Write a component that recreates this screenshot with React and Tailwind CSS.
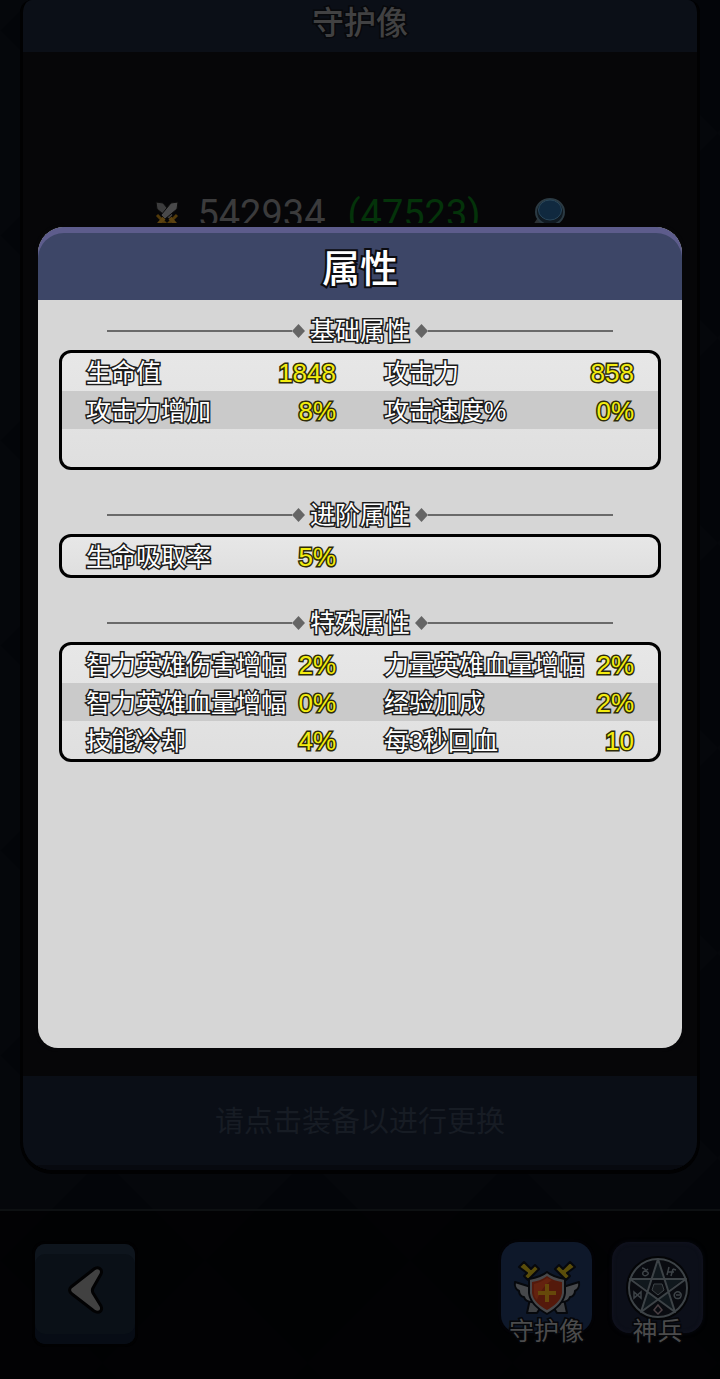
import React from "react";

const FONT = "font-['Liberation_Sans','Noto_Sans_CJK_SC',sans-serif]";
const OUTLINE = "[-webkit-text-stroke:3px_#1c1c1c] [paint-order:stroke_fill]";
const VALUE_OUTLINE = "[-webkit-text-stroke:3px_#2e2c08] [paint-order:stroke_fill]";

const SECTIONS = [
  {
    title: "基础属性",
    rows: [
      [["生命值", "1848"], ["攻击力", "858"]],
      [["攻击力增加", "8%"], ["攻击速度%", "0%"]],
      [],
    ],
  },
  { title: "进阶属性", rows: [[["生命吸取率", "5%"]]] },
  {
    title: "特殊属性",
    rows: [
      [["智力英雄伤害增幅", "2%"], ["力量英雄血量增幅", "2%"]],
      [["智力英雄血量增幅", "0%"], ["经验加成", "2%"]],
      [["技能冷却", "4%"], ["每3秒回血", "10"]],
    ],
  },
];

function Backdrop() {
  return (
    <svg className="absolute inset-0 h-full w-full" aria-hidden="true">
      <defs>
        <pattern id="rhombs" width="205" height="205" y="133" patternUnits="userSpaceOnUse">
          <rect width="205" height="205" fill="#05070b" />
          <path d="M102.5 0L205 102.5L102.5 205L0 102.5Z" fill="#030509" />
        </pattern>
      </defs>
      <rect width="100%" height="100%" fill="url(#rhombs)" />
    </svg>
  );
}

function Swords() {
  return (
    <svg viewBox="0 0 24 26" className="h-[26px] w-6" aria-hidden="true">
      <path d="M1 1L8 2L18 14L14 18L2 8Z" fill="#3c3c3d" stroke="#0b0b0b" />
      <path d="M23 1L16 2L6 14L10 18L22 8Z" fill="#49494a" stroke="#0b0b0b" />
      <path d="M2 14L11 23M22 14L13 23" stroke="#523a0a" strokeWidth="3" />
      <path d="M9 17L2 25M15 17L22 25" stroke="#5c4210" strokeWidth="4" />
    </svg>
  );
}

function Magnifier() {
  return (
    <svg viewBox="0 0 32 36" className="h-9 w-8" aria-hidden="true">
      <path d="M7 23L1 32" stroke="#2b3033" strokeWidth="5" strokeLinecap="round" />
      <ellipse cx="17" cy="16" rx="14" ry="13" fill="#101a22" stroke="#2b3a43" strokeWidth="2" />
      <ellipse cx="17" cy="14" rx="11.500" ry="10" fill="#10293f" stroke="#29465a" strokeWidth="1" />
    </svg>
  );
}

function ShieldIcon() {
  return (
    <svg viewBox="0 0 68 56" className="h-14 w-[68px]" aria-hidden="true">
      <g stroke="#06080c" strokeWidth="2" strokeLinejoin="round">
        <path d="M17 39L14 53H24L29 45Z" fill="#3f4144" />
        <path d="M51 39L54 53H44L39 45Z" fill="#3f4144" />
        <path d="M18 27L2 22C1 27 4 30 6 31C6 35 9 37 11 37C12 40 15 42 19 42Z" fill="#46484b" />
        <path d="M50 27L66 22C67 27 64 30 62 31C62 35 59 37 57 37C56 40 53 42 49 42Z" fill="#46484b" />
        <path d="M6 7L11 2L18 9L22 5L26 9L15 20L11 16L14 13Z" fill="#5a4d0a" />
        <path d="M62 7L57 2L50 9L46 5L42 9L53 20L57 16L54 13Z" fill="#5a4d0a" />
        <path d="M34 12C40 17 46 18 52 19V33C51 43 43 49 34 54C25 49 17 43 16 33V19C22 18 28 17 34 12Z" fill="#48484a" />
      </g>
      <path d="M34 16C39 20 44 21 49 22V33C48 41 41 46 34 50C27 46 20 41 19 33V22C24 21 29 20 34 16Z" fill="#54190b" />
      <path d="M34 18C30 21 25 23 21 24V33C21 36 22 38 24 40C27 32 31 25 39 20Z" fill="#64220f" />
      <path d="M34 24V42M25 33H43" stroke="#66480a" strokeWidth="4" />
    </svg>
  );
}

function PentagramIcon() {
  return (
    <svg viewBox="0 0 64 64" className="h-16 w-16" fill="none" stroke="#3d4347" aria-hidden="true">
      <circle cx="32" cy="32" r="30" fill="#090b10" stroke="#040507" strokeWidth="4" />
      <path d="M32 3L38 22H26ZM59 22L43 34L38 22ZM5 22L21 34L26 22ZM49 57L43 36L32 43ZM15 57L21 36L32 43Z" fill="#10181d" stroke="none" />
      <circle cx="32" cy="32" r="29" strokeWidth="2" />
      <path d="M32 3L49 56L4 23H60L15 56Z" strokeWidth="2" strokeLinejoin="round" />
      <path d="M28 28H36L38 34L32 39L26 34Z" fill="#15191d" strokeWidth="1" />
      <g strokeWidth="1.500">
        <path d="M16 12C20 12 19 16 22 13M18 15C15 18 18 21 21 19C24 17 21 15 18 15" />
        <path d="M43 11L41 19M47 13L45 20M41 16L48 16M47 13L50 14" />
        <path d="M8 36L15 42V36L8 42Z" />
        <path d="M49 37C53 34 57 38 54 42C49 44 47 40 49 37M50 39H54" />
        <path d="M32 49L36 54L32 58L28 54Z" stroke="#4a3f43" />
      </g>
    </svg>
  );
}

function TabButton({ label, className, children }) {
  return (
    <button type="button" className="flex w-[91px] flex-col items-center">
      <span className={`flex h-[91px] w-full items-center justify-center rounded-[18px] ${className}`}>
        {children}
      </span>
      <span className="-mt-[18px] text-[25px] leading-8 text-[#4b4b4c] [-webkit-text-stroke:3px_#050609] [paint-order:stroke_fill]">
        {label}
      </span>
    </button>
  );
}

function Divider({ flip }) {
  return (
    <span className={`flex flex-1 items-center ${flip ? "flex-row-reverse" : ""}`}>
      <span className="h-0.5 flex-1 bg-[#6a6a6a]" />
      <svg viewBox="0 0 13 14" className="h-3.5 w-[13px]" aria-hidden="true">
        <path d="M6.500 0L13 7L6.500 14L0 7Z" fill="#656565" />
      </svg>
    </span>
  );
}

function Section({ title, rows }) {
  return (
    <section>
      <h3 className="flex h-[38px] items-center gap-[5px] px-12 text-[25px] leading-[38px] text-white">
        <Divider />
        <span className={OUTLINE}>{title}</span>
        <Divider flip />
      </h3>
      <dl className="overflow-hidden rounded-xl border-3 border-black bg-linear-to-b from-[#e7e7e7] to-[#dfdfdf]">
        {rows.map((row, i) => (
          <div key={i} className={`grid h-[38px] grid-cols-2 ${i % 2 ? "bg-[#cacaca]" : ""}`}>
            {row.map(([name, value]) => (
              <div key={name} className="flex items-center justify-between px-6 leading-[40px] whitespace-nowrap">
                <dt className={`text-[25px] text-white ${OUTLINE}`}>{name}</dt>
                <dd className={`text-[26px] text-[#f3ec10] ${VALUE_OUTLINE}`}>{value}</dd>
              </div>
            ))}
          </div>
        ))}
      </dl>
    </section>
  );
}

export default function App() {
  return (
    <div className={`relative flex min-h-screen flex-col bg-[#040508] ${FONT}`}>
      <Backdrop />

      <main className="relative mb-[35px] flex flex-1 flex-col px-5">
        <div className="flex flex-1 flex-col overflow-hidden rounded-t-xl rounded-b-[32px] border-x-3 border-b-4 border-[#010102] bg-[#060608]">
          <h1 className="h-[52px] bg-[#0b0f17] text-center text-[32px] leading-[46px] font-medium text-[#414142] [-webkit-text-stroke:3px_#07080b] [paint-order:stroke_fill]">
            守护像
          </h1>
          <div className="flex flex-1 items-start justify-center pt-[140px] font-['Roboto','Noto_Sans_CJK_SC',sans-serif] text-[38px] leading-[44px]">
            <span className="mr-[18px] pt-[9px]"><Swords /></span>
            <span className="mr-[22px] text-[#3b3b3c]">542934</span>
            <span className="mr-[52px] text-[#04330a]">(47523)</span>
            <button type="button" aria-label="查看属性" className="pt-1"><Magnifier /></button>
          </div>
          <p className="h-[94px] bg-[#0a0e16] text-center text-[29px] leading-[92px] text-[#171c24] shadow-[inset_0_-5px_0_#07090f]">
            请点击装备以进行更换
          </p>
        </div>
      </main>

      <nav className="relative flex items-start justify-between border-t-2 border-[#0d1012] bg-black/60 pt-[31px] pr-[17px] pb-[32px] pl-[35px]">
        <button
          type="button"
          aria-label="返回"
          className="mt-0.5 flex size-[100px] items-center justify-center rounded-[10px] bg-[#0a1017] pb-2 pl-0.5 shadow-[inset_0_10px_0_#0e151d,inset_0_-10px_0_#070c15,0_0_0_3px_#010102]"
        >
          <svg viewBox="0 0 36 48" className="h-12 w-9" aria-hidden="true">
            <path
              d="M3 21L26 3C30 0 35 3 33 8L25 22C24 24 24 25 25 27L33 40C35 45 31 48 26 45L4 28C1 26 1 23 3 21Z"
              fill="#414141"
              stroke="#020203"
              strokeWidth="3"
              strokeLinejoin="round"
            />
          </svg>
        </button>
        <div className="flex gap-5">
          <TabButton label="守护像" className="bg-[#0e182a] shadow-[0_0_0_3px_#020205]"><ShieldIcon /></TabButton>
          <TabButton label="神兵" className="bg-[#0c0f19] shadow-[inset_0_0_4px_#151523,0_0_4px_#080a12]"><PentagramIcon /></TabButton>
        </div>
      </nav>

      <div className="absolute inset-0 flex flex-col px-[38px] pt-[227px] pb-[331px]">
        <div
          role="dialog"
          aria-labelledby="stats-title"
          className="flex flex-1 flex-col overflow-hidden rounded-t-[26px] rounded-b-[20px] bg-[#d6d6d6] shadow-[0_0_0_4px_#060608]"
        >
          <h2
            id="stats-title"
            className="h-[73px] rounded-t-[26px] bg-[#3d4667] pt-1.5 text-center text-[38px] leading-[73px] font-medium text-white shadow-[inset_0_6px_0_#5d5c8c]"
          >
            <span className="[-webkit-text-stroke:4px_#0c0c10] [paint-order:stroke_fill]">属性</span>
          </h2>
          <div className="flex flex-col gap-[26px] px-[21px] pt-3">
            {SECTIONS.map((section) => (
              <Section key={section.title} {...section} />
            ))}
          </div>
        </div>
      </div>
    </div>
  );
}
